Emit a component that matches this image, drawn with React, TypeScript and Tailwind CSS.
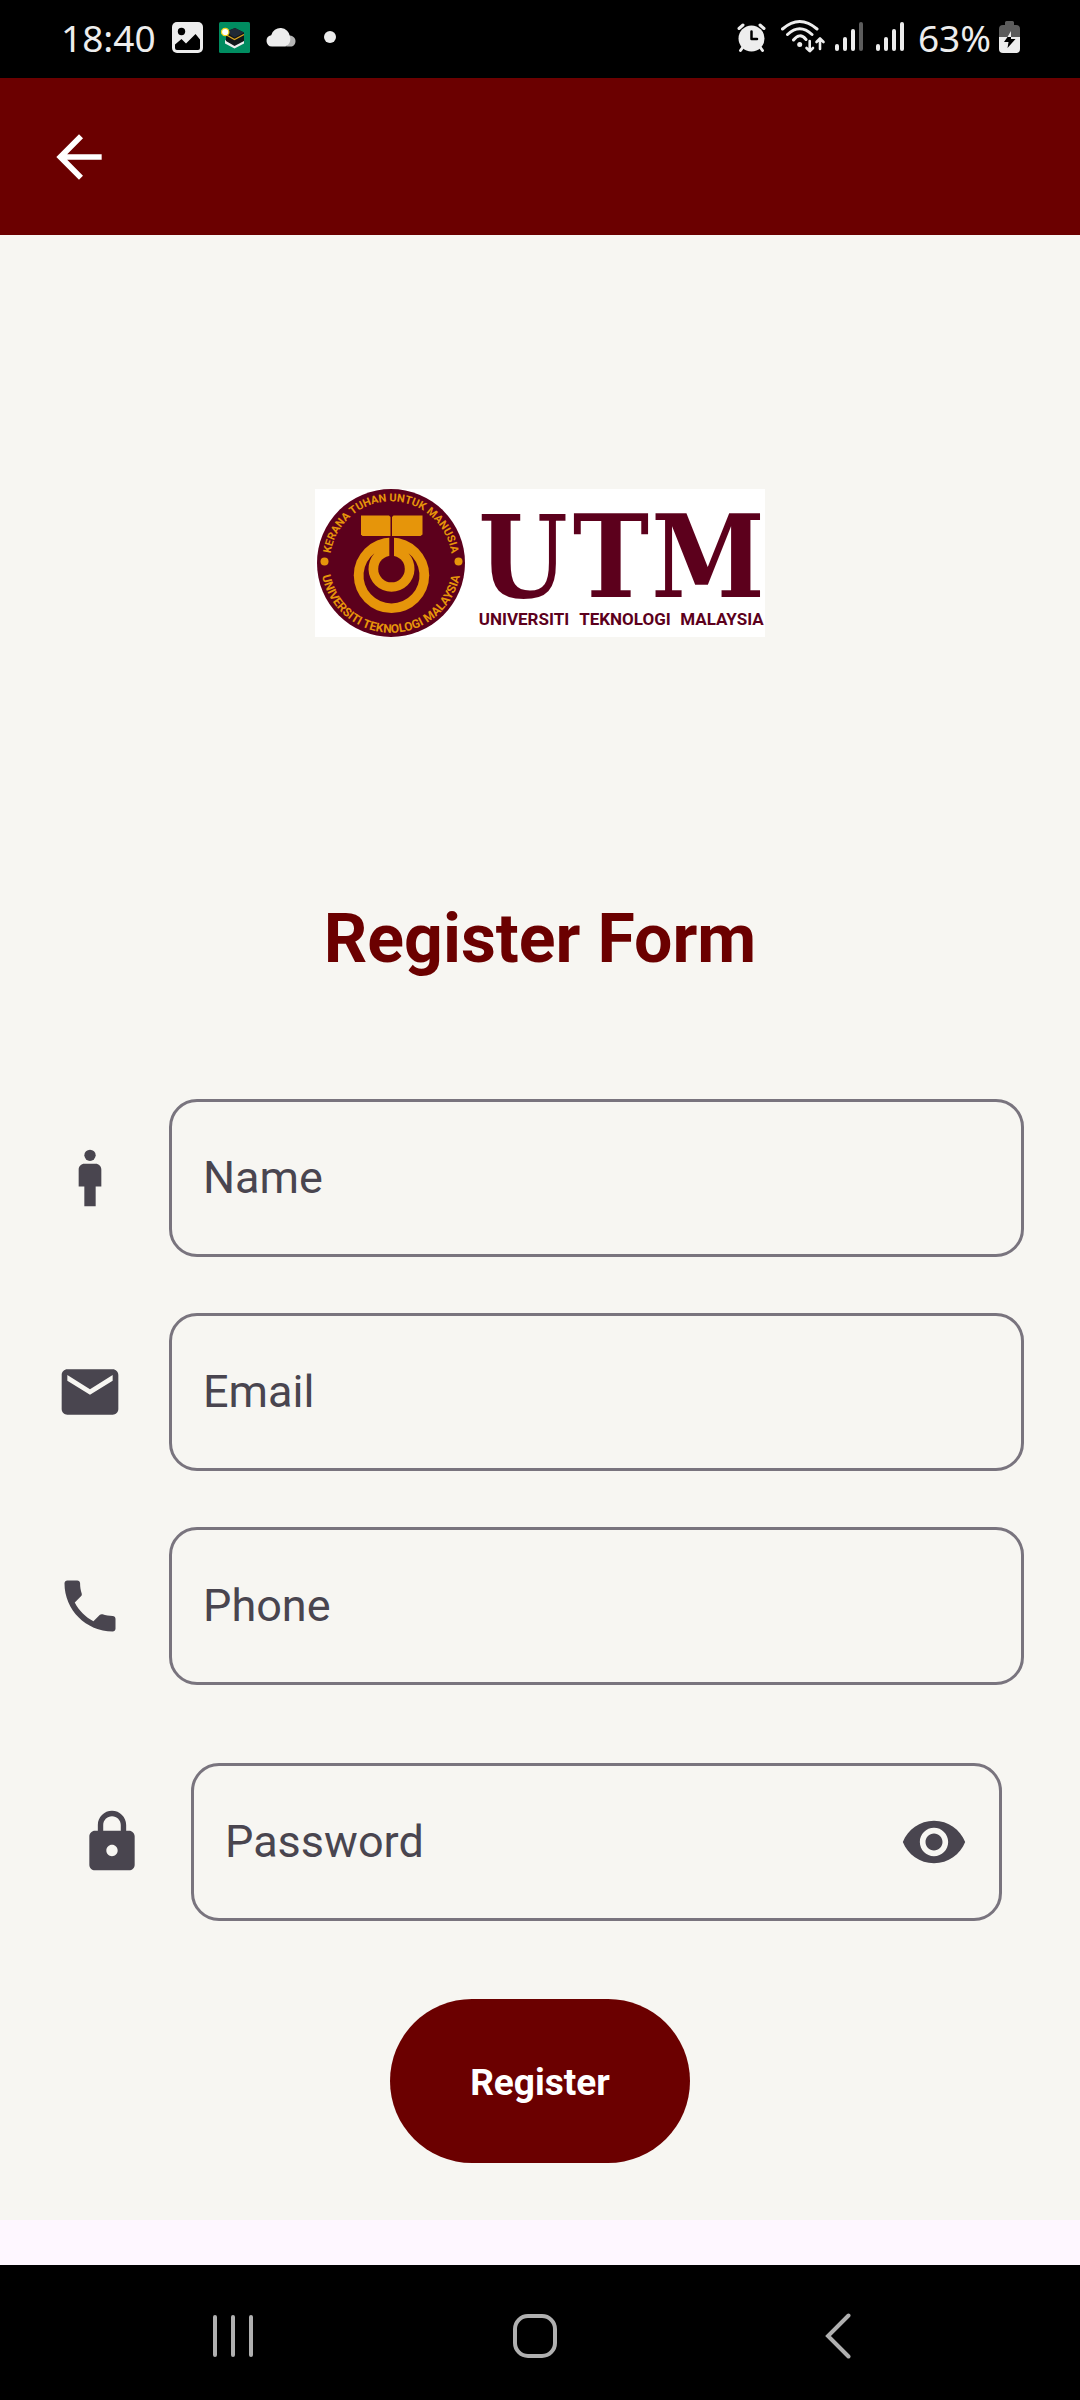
import { useState } from "react";
import type { ReactNode } from "react";
import { MdArrowBack, MdEmail, MdLock, MdMan, MdPhone, MdRemoveRedEye } from "react-icons/md";

function SignalBars({ level }: { level: number }) {
  const tops = [25, 18, 10, 3];
  return (
    <svg width="28" height="32" viewBox="0 0 28 32" aria-hidden="true">
      {tops.map((top, i) => (
        <path
          key={top}
          d={`M${2 + i * 8} ${top}V28`}
          stroke={i < level ? "#ededed" : "#5c5c5c"}
          strokeWidth="4"
          strokeLinecap="round"
        />
      ))}
    </svg>
  );
}

function StatusBar() {
  return (
    <header className="flex h-[78px] items-center justify-between bg-black pr-[60px] pb-1 pl-[61px] font-['Noto_Sans',sans-serif] text-[37px] leading-none text-[#ededed]">
      <div className="flex items-center gap-4">
        <time>18:40</time>
        <svg width="31" height="31" viewBox="0 0 31 31" aria-hidden="true">
          <rect width="31" height="31" rx="5" fill="#ededed" />
          <circle cx="9.500" cy="9.500" r="3.700" fill="#000" />
          <path d="M3 22.500 9.500 17l4.500 4.500L23.500 12l4.500 5.500V26a2 2 0 0 1-2 2H5a2 2 0 0 1-2-2Z" fill="#000" />
        </svg>
        <svg width="31" height="31" viewBox="0 0 31 31" aria-hidden="true">
          <rect width="31" height="31" rx="1.500" fill="#008c60" />
          <path d="m6 18 9.500 5 9.500-5v3.500L15.500 26.500 6 21.500Z" fill="#ededed" />
          <path d="M7 9.500 16 6l9 4.500V19l-9.500 5L7 19Z" fill="#111518" />
          <path d="M7 10 16 6l9 4.500-9.500 5Z" fill="#202a36" />
          <path d="m7.500 13 8 4.500L25 12.500" fill="none" stroke="#d9a521" strokeWidth="1.300" />
          <circle cx="6.200" cy="10" r="3.700" fill="#fff" stroke="#f2d21b" strokeWidth="1.200" />
        </svg>
        <svg width="30" height="22" viewBox="0 0 30 22" aria-hidden="true">
          <path d="M20 20.500C23 18 24 14 22.500 9.500c4 0 7 2 7 5.500s-2 5.500-5 5.500Z" fill="#b5b5b5" />
          <path d="M6 20.500a5.700 5.700 0 0 1-.8-11.300A9.600 9.600 0 0 1 24 10.500c1.200 5-1 8.500-4.500 10Z" fill="#ededed" />
        </svg>
        <span className="ml-3 size-3 rounded-full bg-[#ededed]" />
      </div>
      <div className="flex items-center">
        <svg className="mr-[15px]" width="29" height="31" viewBox="0 0 29 31" aria-hidden="true">
          <g fill="none" stroke="#ededed" strokeWidth="3" strokeLinecap="round">
            <path d="M2 6.500 6 3M27 6.500 23 3M6 25l-2.500 3.500M23 25l2.500 3.500" />
          </g>
          <circle cx="14.500" cy="16.500" r="13" fill="#ededed" />
          <path d="M14.500 9.500v7.500h5.500" fill="none" stroke="#000" strokeWidth="2.500" strokeLinecap="round" strokeLinejoin="round" />
        </svg>
        <svg className="mr-2" width="46" height="36" viewBox="0 0 46 36" aria-hidden="true">
          <g fill="none" stroke="#ededed" strokeWidth="3" strokeLinecap="round" strokeLinejoin="round">
            <path d="M1.500 10Q18.700-5 36 10M6.500 15.500Q18.700 4 31 15.500M12.500 21Q18.700 13 25 20.500" />
            <path d="M28.700 22v10M25.500 29l3.200 3.200L32 29M39 30V20M35.500 23 39 19.500l3.500 3.500" strokeWidth="2.600" />
          </g>
          <circle cx="18.700" cy="25.500" r="2.500" fill="#ededed" />
        </svg>
        <div className="flex gap-[13px]">
          <SignalBars level={3} />
          <SignalBars level={4} />
        </div>
        <span className="mr-2 ml-3.5">63%</span>
        <svg width="21" height="32" viewBox="0 0 21 32" aria-hidden="true">
          <path d="M6 4V1.500A1.500 1.500 0 0 1 7.500 0h6A1.500 1.500 0 0 1 15 1.500V4h2a4 4 0 0 1 4 4v8H0V8a4 4 0 0 1 4-4Z" fill="#5c5c5c" />
          <path d="M0 16h21v12a4 4 0 0 1-4 4H4a4 4 0 0 1-4-4Z" fill="#ededed" />
          <path d="M12 10 8.500 16H12Z" fill="#ededed" />
          <path d="M12 16v2h4.500L8.500 27l1-6H5l3.500-5Z" fill="#000" />
        </svg>
      </div>
    </header>
  );
}

function UniversityLogo() {
  return (
    <svg className="w-[450px] max-w-full" viewBox="0 0 450 148" role="img" aria-label="UTM Universiti Teknologi Malaysia">
      <defs>
        <path id="ring-top" d="M17.300 90a61 61 0 1 1 117.400 0" />
        <path id="ring-bottom" d="M7.800 58a70 70 0 1 0 136.400 0" />
      </defs>
      <rect width="450" height="148" fill="#fff" />
      <circle cx="76" cy="74" r="74" fill="#5c001c" />
      <g className="font-[Roboto,sans-serif] font-bold" fill="#e6950a" textAnchor="middle">
        <text fontSize="11">
          <textPath href="#ring-top" startOffset="50%">KERANA TUHAN UNTUK MANUSIA</textPath>
        </text>
        <text fontSize="12">
          <textPath href="#ring-bottom" startOffset="50%">UNIVERSITI TEKNOLOGI MALAYSIA</textPath>
        </text>
      </g>
      <g fill="#e6950a">
        <circle cx="9.500" cy="72.500" r="4" />
        <circle cx="143.500" cy="72.500" r="4" />
        <path d="M46 26.500H74l1.500 1.500V47H47.500L46 45.500Z" />
        <path d="M107.500 26.500H78.500L77 28V47h28.500l2-1.500Z" />
        <circle cx="76.500" cy="86.300" r="37.700" />
      </g>
      <g fill="#5c001c">
        <path d="M59.500 64.200A28 28 0 1 0 93.500 64.200A23 23 0 1 1 59.500 64.200Z" />
        <circle cx="76.500" cy="80" r="13.300" />
        <path d="M74.300 47.500h4.700V70h-4.700Z" />
      </g>
      <g fill="#5c001c" textAnchor="middle">
        <g fontSize="114" className="font-['DejaVu_Serif_Condensed','DejaVu_Serif',serif] font-bold">
          <text x="208" y="108">U</text>
          <text x="296" y="108">T</text>
          <text x="393" y="108">M</text>
        </g>
        <g fontSize="17" className="font-[Roboto,sans-serif] font-bold">
          <text x="209" y="136">UNIVERSITI</text>
          <text x="310" y="136">TEKNOLOGI</text>
          <text x="407" y="136">MALAYSIA</text>
        </g>
      </g>
    </svg>
  );
}

type FieldProps = {
  id: string;
  label: string;
  type: string;
  icon: ReactNode;
  trailing?: ReactNode;
};

function Field({ id, label, type, icon, trailing }: FieldProps) {
  return (
    <div className="flex items-center gap-[45px] text-[#49454f]">
      <span className="shrink-0 text-[68px]">{icon}</span>
      <div className="relative flex h-[158px] min-w-0 flex-1 items-center rounded-[28px] border-3 border-[#79747e] px-[31px] focus-within:border-[#6b0000]">
        <input
          id={id}
          type={type}
          placeholder=" "
          className="peer h-full min-w-0 flex-1 bg-transparent text-[45px] outline-none"
        />
        <label
          htmlFor={id}
          className="absolute left-[31px] cursor-text text-[45px] leading-[60px] peer-focus:top-0 peer-focus:text-[28px] peer-[:not(:placeholder-shown)]:top-0 peer-[:not(:placeholder-shown)]:text-[28px]"
        >
          {label}
        </label>
        {trailing}
      </div>
    </div>
  );
}

function NavigationBar() {
  return (
    <nav className="grid h-[135px] grid-cols-3 items-center bg-black pt-1.5 pr-[91px] pl-[82px]">
      <button type="button" aria-label="Recent apps" className="flex justify-center">
        <svg width="44" height="44" viewBox="0 0 44 44" fill="none" stroke="#b0b0b0" strokeWidth="4" strokeLinecap="round">
          <path d="M4 3v38M22 3v38M40 3v38" />
        </svg>
      </button>
      <button type="button" aria-label="Home" className="flex justify-center">
        <svg width="44" height="44" viewBox="0 0 44 44" fill="none" stroke="#b0b0b0" strokeWidth="4">
          <rect x="2" y="2" width="40" height="40" rx="13" />
        </svg>
      </button>
      <button type="button" aria-label="Back" className="flex justify-center">
        <svg width="26" height="46" viewBox="0 0 26 46" fill="none" stroke="#b0b0b0" strokeWidth="4" strokeLinecap="round">
          <path d="M23.500 2.500 3 23l20.500 20.500" />
        </svg>
      </button>
    </nav>
  );
}

export default function App() {
  const [showPassword, setShowPassword] = useState(false);
  return (
    <div className="flex min-h-screen flex-col bg-[#fef7ff] font-[Roboto,sans-serif]">
      <StatusBar />
      <div className="flex h-[157px] items-center bg-[#6b0000] px-[45px] text-white">
        <button type="button" aria-label="Navigate up" className="text-[68px]">
          <MdArrowBack />
        </button>
      </div>
      <main className="bg-[#f7f6f2] px-14 pb-[57px]">
        <div className="flex justify-center py-[254px]">
          <UniversityLogo />
        </div>
        <h1 className="pt-2 text-center text-[68px] leading-[80px] font-bold text-[#6b0000]">Register Form</h1>
        <form className="mt-[120px] flex flex-col gap-14" onSubmit={(e) => e.preventDefault()}>
          <Field id="name" label="Name" type="text" icon={<MdMan />} />
          <Field id="email" label="Email" type="email" icon={<MdEmail />} />
          <Field id="phone" label="Phone" type="tel" icon={<MdPhone />} />
          <div className="p-[22px]">
            <Field
              id="password"
              label="Password"
              type={showPassword ? "text" : "password"}
              icon={<MdLock />}
              trailing={
                <button
                  type="button"
                  aria-label="Show password"
                  aria-pressed={showPassword}
                  className="shrink-0 text-[68px]"
                  onClick={() => setShowPassword(!showPassword)}
                >
                  <MdRemoveRedEye />
                </button>
              }
            />
          </div>
          <button
            type="submit"
            className="h-[164px] w-[300px] self-center rounded-full bg-[#6b0000] pt-1 text-[37px] font-bold text-white"
          >
            Register
          </button>
        </form>
      </main>
      <div className="mt-auto">
        <NavigationBar />
      </div>
    </div>
  );
}
